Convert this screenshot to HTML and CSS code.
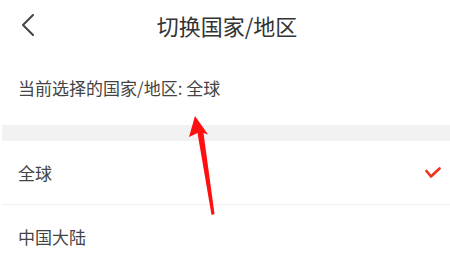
FILE: index.html
```html
<!DOCTYPE html>
<html lang="zh-CN">
<head>
<meta charset="utf-8">
<title>切换国家/地区</title>
<link rel="stylesheet" href="styles.css">
</head>
<body>
<div class="page">
  <header class="header">
    <div class="back">
      <svg width="14" height="22" viewBox="0 0 14 22"><polyline points="12,1 2,11 12,21" fill="none" stroke="#444" stroke-width="2" stroke-linecap="round" stroke-linejoin="round"/></svg>
    </div>
    <h1 class="title">切换国家/地区</h1>
    <div></div>
  </header>
  <p class="current">当前选择的国家/地区: 全球</p>
  <div class="band"></div>
  <ul class="list">
    <li class="row"><span>全球</span>
      <svg class="check" width="16" height="12" viewBox="0 0 16 12"><polyline points="1.5,4 6,9.5 14.5,1.5" fill="none" stroke="#f0311e" stroke-width="2.6" stroke-linecap="round" stroke-linejoin="round"/></svg>
    </li>
    <li class="row"><span>中国大陆</span></li>
  </ul>
  <svg class="pointer" width="450" height="267" viewBox="0 0 450 267"><polygon points="195,116 189,137 197.5,133 211.5,215 214.5,214 203.5,133 208,134.5" fill="#ff0f0f"/></svg>
</div>
</body>
</html>
```
FILE: styles.css
```css
html, body { margin: 0; padding: 0; background: #fff; }
body { font-family: "Noto Sans CJK SC", "Noto Sans", sans-serif; color: #444; }
.page { position: relative; width: 450px; height: 267px; overflow: hidden; }
.header { display: grid; grid-template-columns: 1fr auto 1fr; align-items: center; height: 50px; }
.back { padding-left: 21px; display: flex; align-items: center; }
.title { margin: 0; font-size: 22px; font-weight: 400; color: #333; line-height: 30px; padding-left: 4px; }
.current { margin: 0; padding: 26px 18px 25px; font-size: 17px; line-height: 24px; color: #444; }
.band { height: 16px; background: #f2f2f2; margin-left: 2px; }
.list { list-style: none; margin: 0 0 0 2px; padding: 0; }
.row { display: flex; align-items: center; justify-content: space-between; height: 63px; padding: 0 9px 0 16px; border-bottom: 1px solid #f1f1f1; font-size: 17px; color: #444; }
.check { display: block; margin-top: 1px; }
.pointer { position: absolute; left: 0; top: 0; pointer-events: none; }
```
